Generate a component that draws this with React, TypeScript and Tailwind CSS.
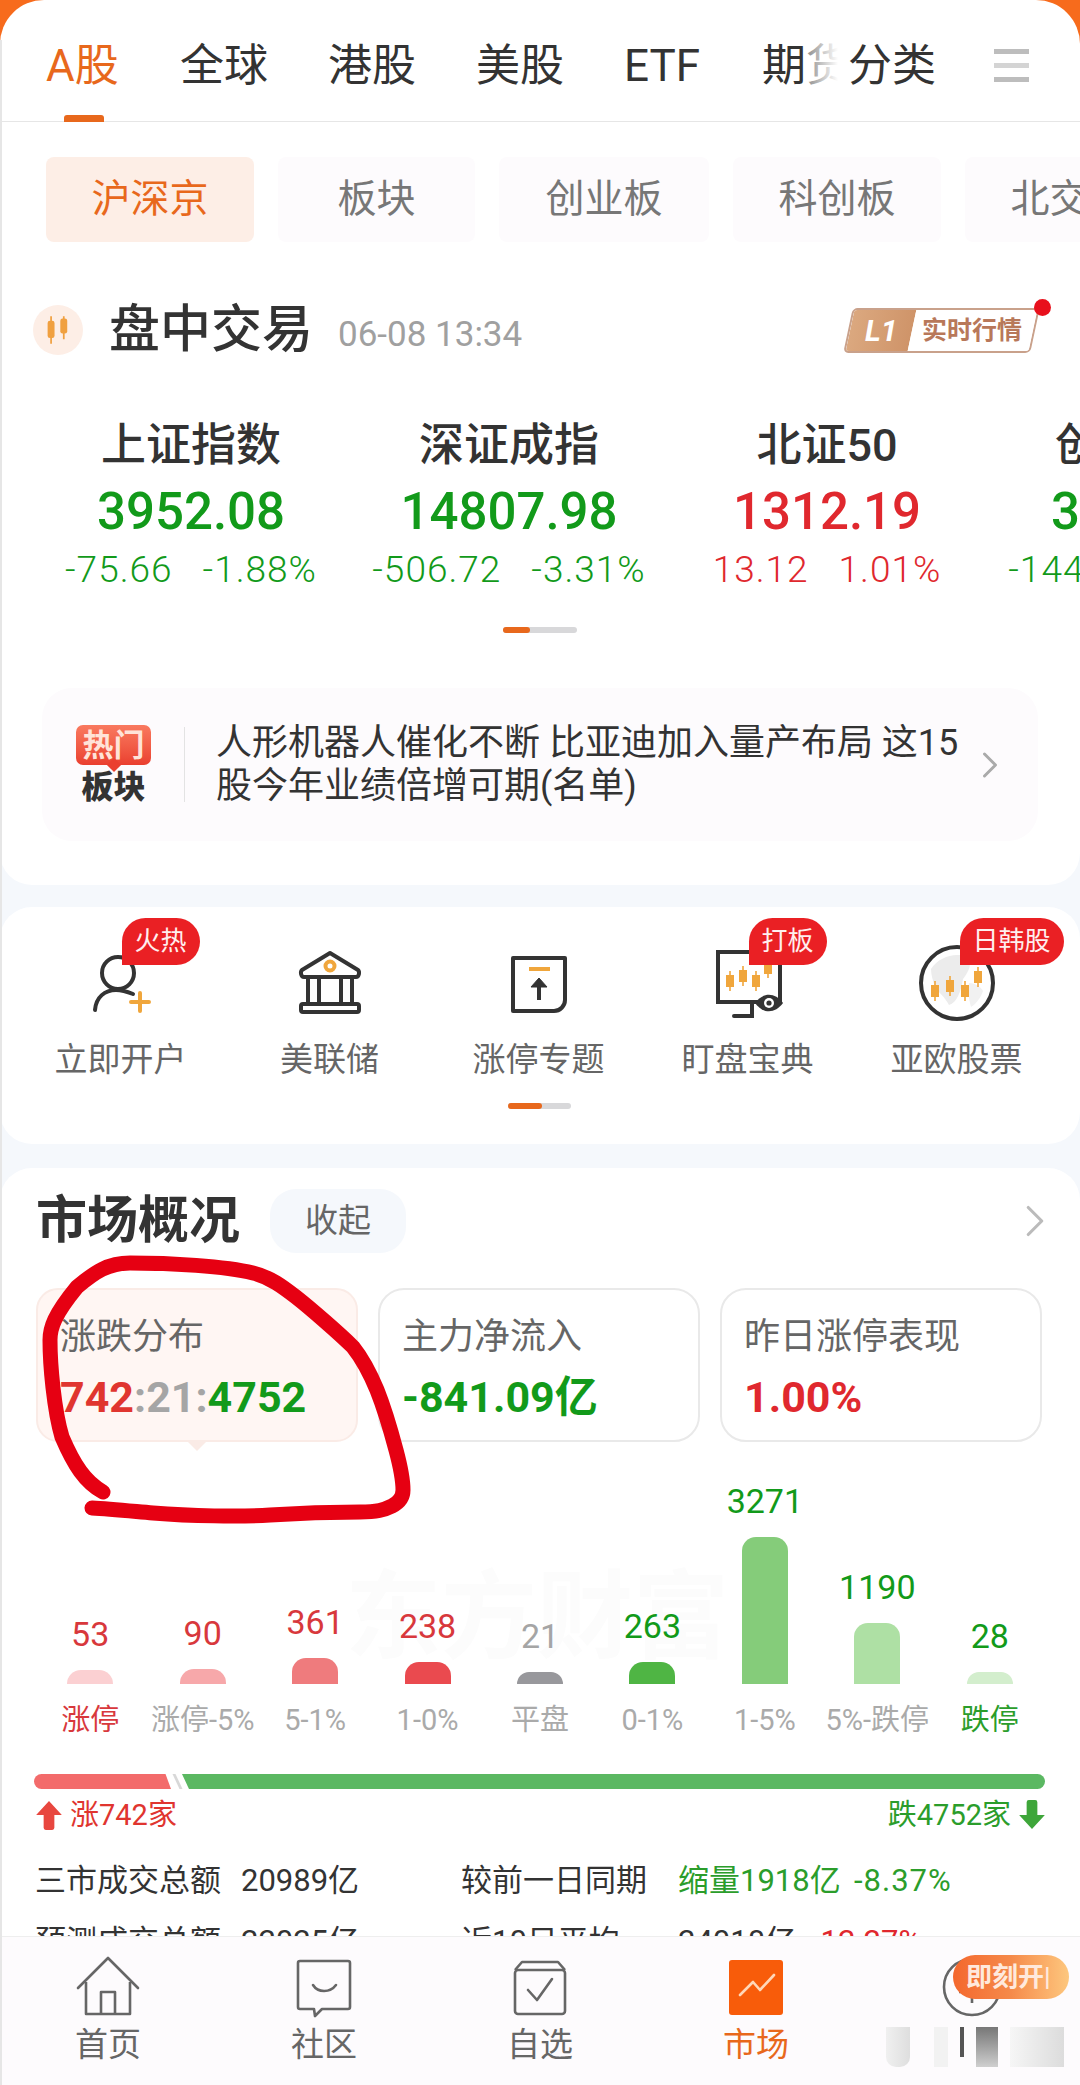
import { ChevronRight } from 'lucide-react';

const tabs = ['全球', '港股', '美股', 'ETF'];
const subTabs = [
  { label: '板块', width: 'w-[197px]' },
  { label: '创业板', width: 'w-[210px]' },
  { label: '科创板', width: 'w-[208px]' },
  { label: '北交所', width: 'w-[208px]' },
];

const indices = [
  { name: '上证指数', value: '3952.08', change: '-75.66', pct: '-1.88%', color: 'text-[#129a1a]' },
  { name: '深证成指', value: '14807.98', change: '-506.72', pct: '-3.31%', color: 'text-[#129a1a]' },
  { name: '北证50', value: '1312.19', change: '13.12', pct: '1.01%', color: 'text-[#e0282e]' },
  { name: '创业板指', value: '3012.64', change: '-144.08', pct: '-4.56%', color: 'text-[#129a1a]' },
];

const bars = [
  { count: '53', label: '涨停', height: 14, bar: 'bg-[#fbd0d2]', num: 'text-[#d8383c]', text: 'text-[#d8383c]' },
  { count: '90', label: '涨停-5%', height: 15, bar: 'bg-[#f7a8aa]', num: 'text-[#d8383c]', text: 'text-[#aaaaaa]' },
  { count: '361', label: '5-1%', height: 26, bar: 'bg-[#ef7b7d]', num: 'text-[#d8383c]', text: 'text-[#aaaaaa]' },
  { count: '238', label: '1-0%', height: 22, bar: 'bg-[#ea4a4f]', num: 'text-[#d8383c]', text: 'text-[#aaaaaa]' },
  { count: '21', label: '平盘', height: 12, bar: 'bg-[#98989c]', num: 'text-[#a5a5a5]', text: 'text-[#aaaaaa]' },
  { count: '263', label: '0-1%', height: 22, bar: 'bg-[#4fb544]', num: 'text-[#129a1a]', text: 'text-[#aaaaaa]' },
  { count: '3271', label: '1-5%', height: 147, bar: 'bg-[#85cc7a]', num: 'text-[#129a1a]', text: 'text-[#aaaaaa]' },
  { count: '1190', label: '5%-跌停', height: 61, bar: 'bg-[#aee0a4]', num: 'text-[#129a1a]', text: 'text-[#aaaaaa]' },
  { count: '28', label: '跌停', height: 12, bar: 'bg-[#d3eecd]', num: 'text-[#129a1a]', text: 'text-[#2b9d2b]' },
];

function Candle({ x, y }: { x: number; y: number }) {
  return (
    <g>
      <line x1={x} y1={y - 10} x2={x} y2={y + 10} stroke="#f0a63c" strokeWidth="1.6" />
      <rect x={x - 4} y={y - 6} width="8" height="12" fill="#f0a63c" />
    </g>
  );
}

function PersonIcon() {
  return (
    <g transform="translate(8 7)" fill="none" strokeWidth="4" strokeLinecap="round">
      <circle cx="29" cy="23" r="16" stroke="#333" />
      <path d="M6 60c1-13 10-20 21-20 7 0 12 2 17 4" stroke="#333" />
      <path d="M51 43v18M42 52h18" stroke="#f0a63c" />
    </g>
  );
}

function BankIcon() {
  return (
    <g transform="translate(8 7)" fill="none" stroke="#333" strokeWidth="4" strokeLinejoin="round">
      <path d="M32 3 4 20c-2 2-1 7 2 7h52c3 0 4-5 2-7Z" />
      <path d="M10 28v26M21 28v26M43 28v26M54 28v26" />
      <rect x="3" y="54" width="58" height="8" rx="2" />
      <circle cx="32" cy="16" r="4.5" stroke="#f0a63c" />
    </g>
  );
}

function LimitUpIcon() {
  return (
    <g transform="translate(8 7)" fill="none" strokeWidth="4">
      <path d="M6 8h52v42c0 6-5 11-11 11H6Z" stroke="#333" strokeLinejoin="round" />
      <path d="M22 19h21" stroke="#f0a63c" />
      <path d="M32 50V30" stroke="#333" />
      <path d="m24 37 8-9 8 9Z" fill="#333" stroke="#333" strokeWidth="1" />
    </g>
  );
}

function MonitorIcon() {
  return (
    <g transform="translate(8 7)">
      <path d="M2 2h62v50H2Z" fill="none" stroke="#333" strokeWidth="4" />
      <path d="M18 66h18V52" fill="none" stroke="#333" strokeWidth="4" strokeLinecap="round" />
      <path d="M44 52h24v14H44Z" fill="#fff" />
      <Candle x={14} y={31} />
      <Candle x={27} y={26} />
      <Candle x={40} y={31} />
      <Candle x={52} y={18} />
      <path d="M39 53c8-11 20-11 28 0-8 11-20 11-28 0Z" fill="#333" />
      <circle cx="53" cy="53" r="5" fill="#fff" />
      <circle cx="53" cy="53" r="2.6" fill="#333" />
    </g>
  );
}

function GlobeIcon() {
  return (
    <g>
      <circle cx="40" cy="40" r="36" fill="#fff" stroke="#333" strokeWidth="4" />
      <path d="M14 26c8-12 24-17 36-12 6 6 2 14-4 22-2 12-6 24-14 26-4-8-10-12-14-18-2-6-4-12-4-18Z" fill="#ececec" />
      <path d="M52 40c6 0 12 4 14 8-2 6-6 12-12 16-2-8-4-16-2-24Z" fill="#f1f1f1" />
      <Candle x={18} y={48} />
      <Candle x={33} y={43} />
      <Candle x={48} y={48} />
      <Candle x={61} y={34} />
    </g>
  );
}

const shortcuts = [
  { label: '立即开户', badge: '火热', badgeClass: 'left-[calc(50%+1px)]', icon: <PersonIcon /> },
  { label: '美联储', icon: <BankIcon /> },
  { label: '涨停专题', icon: <LimitUpIcon /> },
  { label: '盯盘宝典', badge: '打板', badgeClass: 'left-[calc(50%+1px)]', icon: <MonitorIcon /> },
  { label: '亚欧股票', badge: '日韩股', badgeClass: 'left-[calc(50%+3px)]', icon: <GlobeIcon /> },
];

function HomeTab() {
  return (
    <svg viewBox="0 0 64 64" className="w-[64px] h-[64px]" fill="none" stroke="#666" strokeWidth="2.6" strokeLinejoin="round">
      <path d="M2 33 32 3l30 30" strokeLinecap="round" />
      <path d="M10 27v32h44V27" />
      <path d="M25 59V37h14v22" />
    </svg>
  );
}

function CommunityTab() {
  return (
    <svg viewBox="0 0 64 64" className="w-[64px] h-[64px]" fill="none" stroke="#666" strokeWidth="2.6" strokeLinejoin="round">
      <path d="M8 6h48a2 2 0 0 1 2 2v44a2 2 0 0 1-2 2H30l-7 7-1-7H8a2 2 0 0 1-2-2V8a2 2 0 0 1 2-2Z" />
      <path d="M21 30c5 8 17 8 23 0" strokeLinecap="round" />
    </svg>
  );
}

function WatchTab() {
  return (
    <svg viewBox="0 0 64 64" className="w-[64px] h-[64px]" fill="none" stroke="#666" strokeWidth="2.6" strokeLinejoin="round">
      <path d="M7 15 14 7h36l7 8" />
      <rect x="7" y="15" width="50" height="44" rx="3" />
      <path d="m20 35 9 10 15-21" strokeLinecap="round" />
    </svg>
  );
}

function MarketTab() {
  return (
    <svg viewBox="0 0 64 64" className="w-[64px] h-[64px]">
      <rect x="5" y="5" width="54" height="55" rx="3" fill="#f85c0a" />
      <path d="M16 40 29 27l7 8 14-15" fill="none" stroke="#ffd7b8" strokeWidth="2.6" strokeLinecap="round" strokeLinejoin="round" />
    </svg>
  );
}

function MoneyTab() {
  return (
    <svg viewBox="0 0 64 64" className="w-[64px] h-[64px]" fill="none" stroke="#666" strokeWidth="2.6">
      <circle cx="32" cy="32" r="28" />
      <path d="M20 26h24M19 37h26M32 26v22" />
    </svg>
  );
}

export default function App() {
  return (
    <div className="relative w-[1080px] h-[2085px] flex flex-col overflow-hidden bg-[#f5f8fc] font-['Roboto','Noto_Sans_CJK_SC',sans-serif]">
      <div className="flex-1 min-h-0 overflow-hidden">
        {/* Top tabs */}
        <div className="bg-[#f76b1c]">
          <div className="relative h-[122px] bg-white rounded-t-[44px] border-b border-[#e6e6e6] flex items-start pl-[46px]">
            <div className="relative w-[792px] flex-none flex overflow-hidden pt-[40px] text-[44px] leading-[52px] text-[#333] whitespace-nowrap">
              <span className="w-[134px] flex-none text-[#e8681c]">A股</span>
              <div className="flex gap-[60px]">
                {tabs.map((tab) => (
                  <span key={tab}>{tab}</span>
                ))}
              </div>
              <span className="ml-[62px]">期货</span>
              <div className="absolute right-0 top-0 bottom-0 w-[34px] bg-gradient-to-r from-white/40 to-white" />
            </div>
            <span className="ml-[10px] pt-[40px] text-[44px] leading-[52px] text-[#333] whitespace-nowrap">分类</span>
            <div className="ml-[58px] mt-[49px] w-[35px] h-[33px] flex flex-col justify-between">
              <div className="h-[5px] bg-[#bdbdbd]" />
              <div className="h-[5px] bg-[#d4d4d4]" />
              <div className="h-[5px] bg-[#bdbdbd]" />
            </div>
            <div className="absolute left-[64px] bottom-[-1px] w-[40px] h-[7px] rounded-t-[3px] bg-[#e8681c]" />
          </div>
        </div>

        <div className="bg-white rounded-b-[32px] pb-[44px]">
          {/* Sub tabs */}
          <div className="flex gap-[24px] pl-[46px] pt-[35px] overflow-hidden text-[39px]">
            <div className="w-[208px] h-[85px] flex-none flex items-center justify-center rounded-[8px] bg-[#fdeee6] text-[#e8681c]">沪深京</div>
            {subTabs.map((tab) => (
              <div key={tab.label} className={`${tab.width} h-[85px] flex-none flex items-center justify-center rounded-[8px] bg-[#fdfbfd] text-[#777]`}>
                {tab.label}
              </div>
            ))}
          </div>

          {/* Section head */}
          <div className="flex items-center pl-[33px] pr-[45px] mt-[63px] h-[50px]">
            <div className="w-[50px] h-[50px] rounded-full bg-[#fdeee6] flex items-center justify-center">
              <svg viewBox="0 0 26 26" className="w-[30px] h-[30px]">
                <path d="M7 1v24M18 1v20" stroke="#f0a040" strokeWidth="1.5" />
                <rect x="4" y="5" width="6" height="15" rx="2" fill="#f0a040" />
                <rect x="15" y="3" width="6" height="13" rx="2" fill="#f0a040" />
              </svg>
            </div>
            <h2 className="ml-[26px] text-[51px] leading-[60px] font-medium text-[#333]">盘中交易</h2>
            <span className="ml-[25px] mt-[10px] text-[35px] text-[#a0a0a0]">06-08 13:34</span>
            <div className="relative ml-auto w-[187px] h-[45px]">
              <div className="flex h-full -skew-x-12 rounded-[5px] overflow-hidden border-2 border-[#c9a18b]">
                <div className="w-[62px] flex items-center justify-center bg-gradient-to-r from-[#dba87f] to-[#cf9469]">
                  <span className="skew-x-12 text-[30px] leading-none font-bold italic text-white">L1</span>
                </div>
                <div className="flex-1 flex items-center justify-center bg-white">
                  <span className="skew-x-12 text-[25px] leading-none font-bold text-[#b8785a]">实时行情</span>
                </div>
              </div>
              <div className="absolute right-[-16px] top-[-9px] w-[17px] h-[17px] rounded-full bg-[#e8101c]" />
            </div>
          </div>

          {/* Index quotes */}
          <div className="flex pl-[32px] pt-[64px] overflow-hidden">
            {indices.map((item) => (
              <div key={item.name} className="w-[318px] flex-none text-center whitespace-nowrap">
                <div className="text-[45px] leading-[54px] font-medium text-[#333]">{item.name}</div>
                <div className={`mt-[8px] text-[51px] leading-[62px] font-medium ${item.color}`}>{item.value}</div>
                <div className={`mt-[5px] flex justify-center gap-[30px] text-[37px] tracking-[1px] leading-[44px] font-light ${item.color}`}>
                  <span>{item.change}</span>
                  <span>{item.pct}</span>
                </div>
              </div>
            ))}
          </div>
          <div className="ml-[503px] mt-[35px] w-[74px] h-[6px] rounded-full bg-[#d8d8da]">
            <div className="w-[27px] h-full rounded-full bg-[#e8681c]" />
          </div>

          {/* Hot sector */}
          <div className="mx-[42px] mt-[55px] h-[153px] rounded-[30px] bg-[#fdfbfd] flex items-center pl-[33px]">
            <div className="w-[77px] flex-none flex flex-col items-center">
              <div className="relative w-[75px] h-[40px] rounded-[7px] bg-gradient-to-b from-[#f9795f] to-[#ea3f2f] flex items-center justify-center text-[31px] leading-none font-bold text-[#ffe3d8]">
                热门
                <div className="absolute bottom-[-5px] left-1/2 -ml-[5px] w-[10px] h-[10px] rotate-45 bg-[#ea3f2f]" />
              </div>
              <div className="mt-[5px] text-[32px] leading-[34px] font-black text-[#333]">板块</div>
            </div>
            <div className="ml-[32px] w-px h-[75px] bg-[#e3e3e3]" />
            <p className="ml-[31px] w-[760px] flex-none text-[36px] leading-[43px] text-[#333] whitespace-nowrap">
              人形机器人催化不断 比亚迪加入量产布局 这15
              <br />
              股今年业绩倍增可期(名单)
            </p>
            <ChevronRight className="w-[44px] h-[44px] ml-[-8px] flex-none text-[#aaaaaa]" strokeWidth={1.6} />
          </div>
        </div>

        {/* Shortcuts */}
        <div className="mt-[22px] h-[237px] rounded-[32px] bg-white pt-[36px]">
          <div className="grid grid-cols-[repeat(5,209px)] pl-[16px]">
            {shortcuts.map((item) => (
              <div key={item.label} className="relative flex flex-col items-center">
                <svg viewBox="0 0 80 80" className="w-[80px] h-[80px]">
                  {item.icon}
                </svg>
                {item.badge && (
                  <span className={`absolute top-[-25px] h-[47px] px-[13px] rounded-[24px] rounded-bl-none bg-[#ea2024] text-[26px] leading-[47px] text-[#ffeeee] whitespace-nowrap ${item.badgeClass}`}>
                    {item.badge}
                  </span>
                )}
                <span className="mt-[17px] text-[33px] leading-[40px] text-[#666]">{item.label}</span>
              </div>
            ))}
          </div>
          <div className="ml-[508px] mt-[23px] w-[63px] h-[6px] rounded-full bg-[#d8d8da]">
            <div className="w-[34px] h-full rounded-full bg-[#e8681c]" />
          </div>
        </div>

        {/* Market overview */}
        <div className="relative mt-[24px] rounded-t-[32px] bg-white pt-[21px] h-[800px]">
          <div className="flex items-center h-[64px] pl-[36px] pr-[18px]">
            <h2 className="text-[51px] leading-[60px] font-bold text-[#333]">市场概况</h2>
            <div className="ml-[30px] w-[136px] h-[64px] rounded-[26px] bg-[#f5f8fc] flex items-center justify-center text-[33px] text-[#666]">收起</div>
            <ChevronRight className="ml-auto w-[54px] h-[54px] text-[#bbbbbb]" strokeWidth={1.4} />
          </div>

          <div className="grid grid-cols-3 gap-[20px] pl-[36px] pr-[38px] mt-[35px]">
            <div className="relative h-[154px] rounded-[22px] border-2 border-[#faebe6] bg-[#fff6f3] pl-[22px] pt-[26px]">
              <div className="text-[36px] leading-[42px] text-[#666]">涨跌分布</div>
              <div className="mt-[13px] text-[43px] leading-[52px] font-bold whitespace-nowrap">
                <span className="text-[#e0352f]">742</span>
                <span className="text-[#a5a5a5]">:21:</span>
                <span className="text-[#129a1a]">4752</span>
              </div>
              <div className="absolute left-1/2 bottom-[-11px] -ml-[11px] w-[22px] h-[11px] bg-[#faebe6] [clip-path:polygon(0_0,100%_0,50%_100%)]" />
            </div>
            <div className="h-[154px] rounded-[26px] border-2 border-[#e9e9e9] pl-[22px] pt-[26px]">
              <div className="text-[36px] leading-[42px] text-[#666]">主力净流入</div>
              <div className="mt-[13px] text-[43px] leading-[52px] font-bold text-[#129a1a] whitespace-nowrap">-841.09亿</div>
            </div>
            <div className="h-[154px] rounded-[26px] border-2 border-[#e9e9e9] pl-[22px] pt-[26px]">
              <div className="text-[36px] leading-[42px] text-[#666]">昨日涨停表现</div>
              <div className="mt-[13px] text-[43px] leading-[52px] font-bold text-[#e0282e]">1.00%</div>
            </div>
          </div>

          {/* Distribution chart */}
          <div className="relative grid grid-cols-9 h-[242px] px-[34px] items-end">
            <div className="absolute left-[345px] top-[120px] text-[96px] leading-[110px] font-bold text-[#fcfcfc] whitespace-nowrap">东方财富</div>
            {bars.map((b) => (
              <div key={b.label} className="relative flex flex-col items-center">
                <span className={`mb-[16px] text-[34px] leading-[40px] ${b.num}`}>{b.count}</span>
                <div className={`w-[46px] rounded-t-[14px] ${b.bar}`} style={{ height: b.height }} />
              </div>
            ))}
          </div>
          <div className="grid grid-cols-9 px-[34px] mt-[19px]">
            {bars.map((b) => (
              <span key={b.label} className={`text-center text-[29px] leading-[34px] whitespace-nowrap ${b.text}`}>
                {b.label}
              </span>
            ))}
          </div>

          {/* Up / down bar */}
          <div className="flex items-center pl-[34px] pr-[35px] mt-[37px] h-[15px]">
            <div className="w-[137px] h-full rounded-l-full bg-[#f36b6b] [clip-path:polygon(0_0,96%_0,100%_100%,0_100%)]" />
            <div className="ml-[5px] w-[3px] h-full skew-x-[25deg] bg-[#d8d8d8]" />
            <div className="ml-[3px] flex-1 h-full rounded-r-full bg-[#5bb862] [clip-path:polygon(0_0,100%_0,100%_100%,7px_100%)]" />
          </div>
          <div className="flex items-center justify-between pl-[36px] pr-[35px] mt-[9px] text-[29px] leading-[34px]">
            <div className="flex items-center gap-[8px] text-[#e0352f]">
              <svg viewBox="0 0 24 28" className="w-[26px] h-[30px]">
                <path d="M12 1 24 14h-7v12a2 2 0 0 1-2 2H9a2 2 0 0 1-2-2V14H0Z" fill="#e8473f" />
              </svg>
              涨742家
            </div>
            <div className="flex items-center gap-[8px] text-[#2b9d2b]">
              跌4752家
              <svg viewBox="0 0 24 28" className="w-[26px] h-[30px]">
                <path d="M12 27 24 14h-7V2a2 2 0 0 0-2-2H9a2 2 0 0 0-2 2v12H0Z" fill="#3ea63a" />
              </svg>
            </div>
          </div>

          {/* Volume stats */}
          <div className="flex mt-[29px] pl-[35px] text-[31px] leading-[40px] text-[#333] whitespace-nowrap">
            <span className="w-[206px]">三市成交总额</span>
            <span className="w-[220px]">20989亿</span>
            <span className="w-[217px]">较前一日同期</span>
            <span className="w-[176px] text-[#2b9d2b]">缩量1918亿</span>
            <span className="text-[#2b9d2b] tracking-[1px]">-8.37%</span>
          </div>
          <div className="flex mt-[21px] pl-[35px] text-[31px] leading-[40px] text-[#333] whitespace-nowrap">
            <span className="w-[206px]">预测成交总额</span>
            <span className="w-[220px]">22025亿</span>
            <span className="w-[217px]">近10日平均</span>
            <span className="w-[134px]">24018亿</span>
            <span className="text-[#e0282e]">-12.27%</span>
          </div>
        </div>
      </div>

      {/* Bottom nav */}
      <div className="relative z-10 flex-none h-[149px] grid grid-cols-5 border-t border-[#eeeeee] bg-[#fdfbfd] pt-[18px]">
        <div className="flex flex-col items-center">
          <HomeTab />
          <span className="mt-[6px] text-[33px] leading-[40px] text-[#666]">首页</span>
        </div>
        <div className="flex flex-col items-center">
          <CommunityTab />
          <span className="mt-[6px] text-[33px] leading-[40px] text-[#666]">社区</span>
        </div>
        <div className="flex flex-col items-center">
          <WatchTab />
          <span className="mt-[6px] text-[33px] leading-[40px] text-[#666]">自选</span>
        </div>
        <div className="flex flex-col items-center">
          <MarketTab />
          <span className="mt-[6px] text-[33px] leading-[40px] text-[#e8681c]">市场</span>
        </div>
        <div className="relative flex flex-col items-center">
          <MoneyTab />
          <div className="absolute left-[89px] top-[0px] w-[116px] h-[44px] rounded-full bg-gradient-to-r from-[#f4672d] via-[#f58a4a] to-[#fdc77e] pl-[13px] text-[26px] leading-[44px] font-bold text-[#ffe9dc] whitespace-nowrap">
            即刻开|
          </div>
          <div className="mt-[8px] ml-[6px] w-[178px] h-[40px] flex items-stretch gap-[12px]">
            <div className="w-[24px] rounded-b-[10px] bg-gradient-to-r from-[#f0f0f0] to-[#dedede]" />
            <div className="w-[14px] ml-[12px] bg-[#f2f2f2]" />
            <div className="w-[4px] h-[30px] bg-[#555]" />
            <div className="w-[22px] h-[40px] bg-gradient-to-b from-[#777] to-[#cfcfcf]" />
            <div className="flex-1 bg-gradient-to-l from-[#dcdcdc] to-[#f6f6f6]" />
          </div>
        </div>
      </div>

      {/* Hand-drawn circle on the screenshot */}
      <svg viewBox="0 0 1080 2085" className="absolute inset-0 z-20 w-[1080px] h-[2085px] pointer-events-none" fill="none">
        <path
          d="M103 1492C85 1482 74 1465 62 1437C54 1410 50 1365 50 1340C50 1328 54 1315 77 1287C95 1272 108 1263 130 1263C170 1263 225 1266 253 1273C270 1277 283 1287 296 1297C310 1308 340 1334 353 1347C365 1362 372 1378 377 1390C385 1410 392 1435 396 1450C400 1465 403 1478 403 1490C403 1498 398 1503 392 1506C384 1510 377 1512 360 1512C330 1512 300 1513 270 1515C240 1517 190 1516 153 1513C130 1511 110 1509 92 1508"
          stroke="#e60012"
          strokeWidth="15"
          strokeLinecap="round"
          strokeLinejoin="round"
        />
      </svg>
      <div className="absolute z-20 left-0 top-[40px] bottom-0 w-[2px] bg-[#e6e6e6]" />
    </div>
  );
}
